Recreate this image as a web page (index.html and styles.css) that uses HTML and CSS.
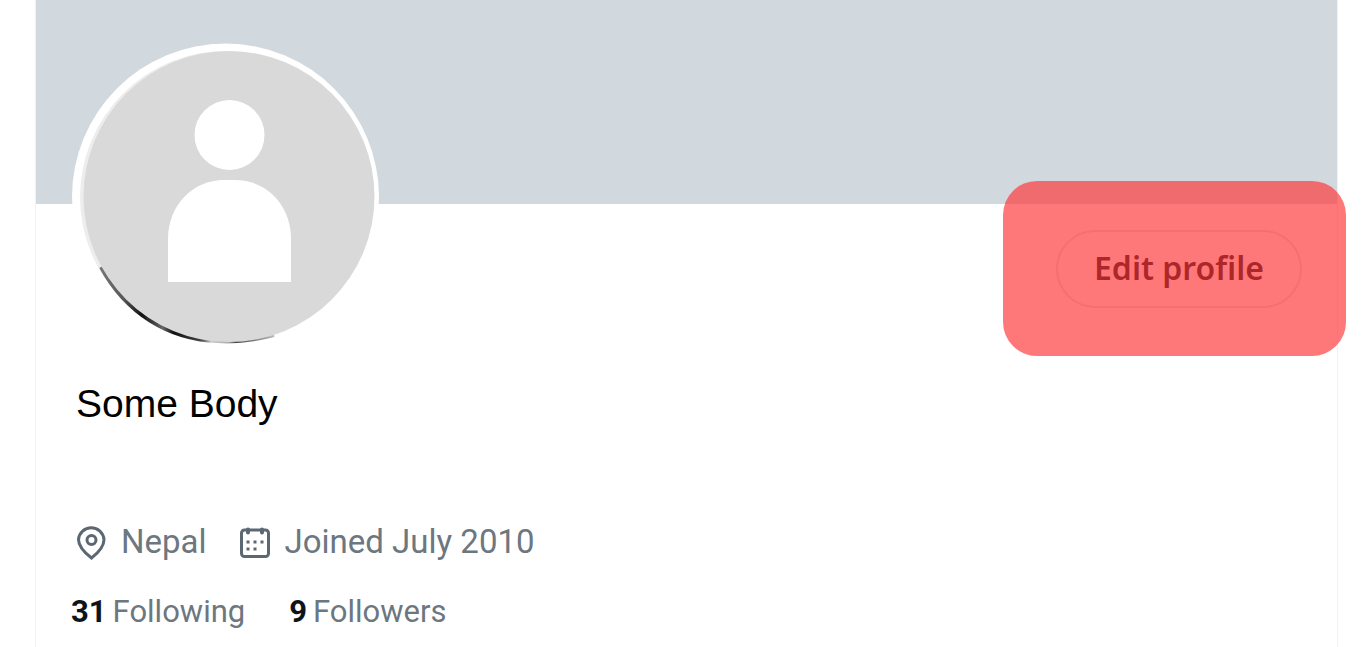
FILE: index.html
```html
<!DOCTYPE html>
<html lang="en">
<head>
    <meta charset="UTF-8">
    <meta name="viewport" content="width=device-width, initial-scale=1">
    <link rel="stylesheet" href="styles.css">
    <title>Some Body</title>
</head>
<body>
<main class="profile">
    <div class="banner"></div>
    <div class="profileTop">
        <svg class="avatar" viewBox="0 0 308 308" role="img" aria-label="Profile picture">
            <defs>
                <linearGradient id="rim" gradientUnits="userSpaceOnUse" x1="29" y1="0" x2="203" y2="0">
                    <stop offset="0" stop-color="#777"/>
                    <stop offset="0.14" stop-color="#555"/>
                    <stop offset="0.24" stop-color="#111"/>
                    <stop offset="0.36" stop-color="#666"/>
                    <stop offset="0.42" stop-color="#111"/>
                    <stop offset="0.58" stop-color="#444"/>
                    <stop offset="0.64" stop-color="#ccc"/>
                    <stop offset="0.74" stop-color="#aaa"/>
                    <stop offset="0.78" stop-color="#444"/>
                    <stop offset="1" stop-color="#bbb"/>
                </linearGradient>
            </defs>
            <circle cx="154.5" cy="154" r="153.5" fill="#fff"/>
            <circle cx="155" cy="154" r="146" fill="#ededed"/>
            <path d="M30 224 C55 270 97 296 146 298 Q172 300 203 292" fill="none" stroke="url(#rim)" stroke-width="4"/>
            <circle cx="158" cy="153.5" r="145.5" fill="#d9d9d9"/>
            <circle cx="158.5" cy="92" r="35" fill="#fff"/>
            <path d="M97 239 V196 C97 162 122 137 153 137 H164 C195 137 220 162 220 196 V239 Z" fill="#fff"/>
        </svg>
        <div class="editBox">
            <button class="editButton" type="button">Edit profile</button>
            <span class="highlight"></span>
        </div>
    </div>
    <h1 class="name">Some Body</h1>
    <div class="info">
        <span class="infoItem">
            <svg class="icon" viewBox="0 0 40 40" aria-hidden="true">
                <path d="M20.5 36 C14 31 7.500 25 7.500 17.500 A12.800 12.800 0 0 1 33 17.500 C33 25 27 31 20.500 36 Z" fill="none" stroke="#5b6874" stroke-width="3"/>
                <circle cx="20.5" cy="18" r="4.500" fill="none" stroke="#5b6874" stroke-width="3"/>
            </svg>
            Nepal
        </span>
        <span class="infoItem">
            <svg class="icon" viewBox="0 0 40 40" aria-hidden="true">
                <rect x="6.500" y="8" width="27" height="26.500" rx="3" fill="none" stroke="#5b6874" stroke-width="3"/>
                <path d="M13 7.500v3M27 7.500v3" fill="none" stroke="#5b6874" stroke-width="4" stroke-linecap="round"/>
                <path d="M11.500 18.500h3v3h-3zM18.500 18.500h3v3h-3zM25.500 18.500h3v3h-3zM11.500 25.500h3v3h-3zM18.500 25.500h3v3h-3z" fill="#5b6874"/>
            </svg>
            Joined July 2010
        </span>
    </div>
    <div class="stats">
        <a class="stat" href="#following"><b>31</b> <span>Following</span></a>
        <a class="stat" href="#followers"><b>9</b> <span>Followers</span></a>
    </div>
</main>
</body>
</html>
```

FILE: styles.css
```css
body {
    margin: 0;
    background-color: white;
    color: #6c7780;
    font-family: Roboto, "Liberation Sans", sans-serif;
    font-size: 33px;
    line-height: 40px;
}

.profile {
    margin: 0 28px 0 35px;
    border: 1px solid #eff3f4;
    border-top: none;
    border-bottom: none;
    min-height: 100vh;
    box-sizing: border-box;
}

.banner {
    height: 204px;
    background-color: #d1d8de;
}

.profileTop {
    display: flex;
    justify-content: space-between;
    align-items: flex-end;
    margin-top: -161px;
    padding: 0 35px;
}

.avatar {
    width: 308px;
    height: 308px;
}

.editBox {
    position: relative;
    margin-bottom: 43px;
}

.editButton {
    width: 246px;
    height: 78px;
    border: 2px solid #dde4e8;
    border-radius: 39px;
    padding: 0 0 4px;
    background-color: white;
    color: #0f1419;
    font-family: "Noto Sans", sans-serif;
    font-size: 32px;
    font-weight: 600;
    cursor: pointer;
}

.highlight {
    position: absolute;
    inset: -49px -44px -48px -53px;
    border-radius: 34px;
    background-color: rgba(255, 50, 52, 0.66);
    pointer-events: none;
}

.name {
    margin: 29px 40px 0;
    color: black;
    font-family: "Liberation Sans", Arial, sans-serif;
    font-size: 39px;
    font-weight: 400;
    line-height: 48px;
}

.info {
    display: flex;
    gap: 28px;
    margin: 94px 35px 0;
}

.infoItem {
    display: flex;
    align-items: center;
    gap: 10px;
}

.icon {
    width: 40px;
    height: 40px;
}

.stats {
    display: flex;
    gap: 44px;
    margin: 30px 35px 0;
    font-size: 31px;
}

.stat {
    display: flex;
    gap: 6px;
    color: #6c7780;
    text-decoration: none;
}

.stat b {
    color: #0f1419;
}
```
